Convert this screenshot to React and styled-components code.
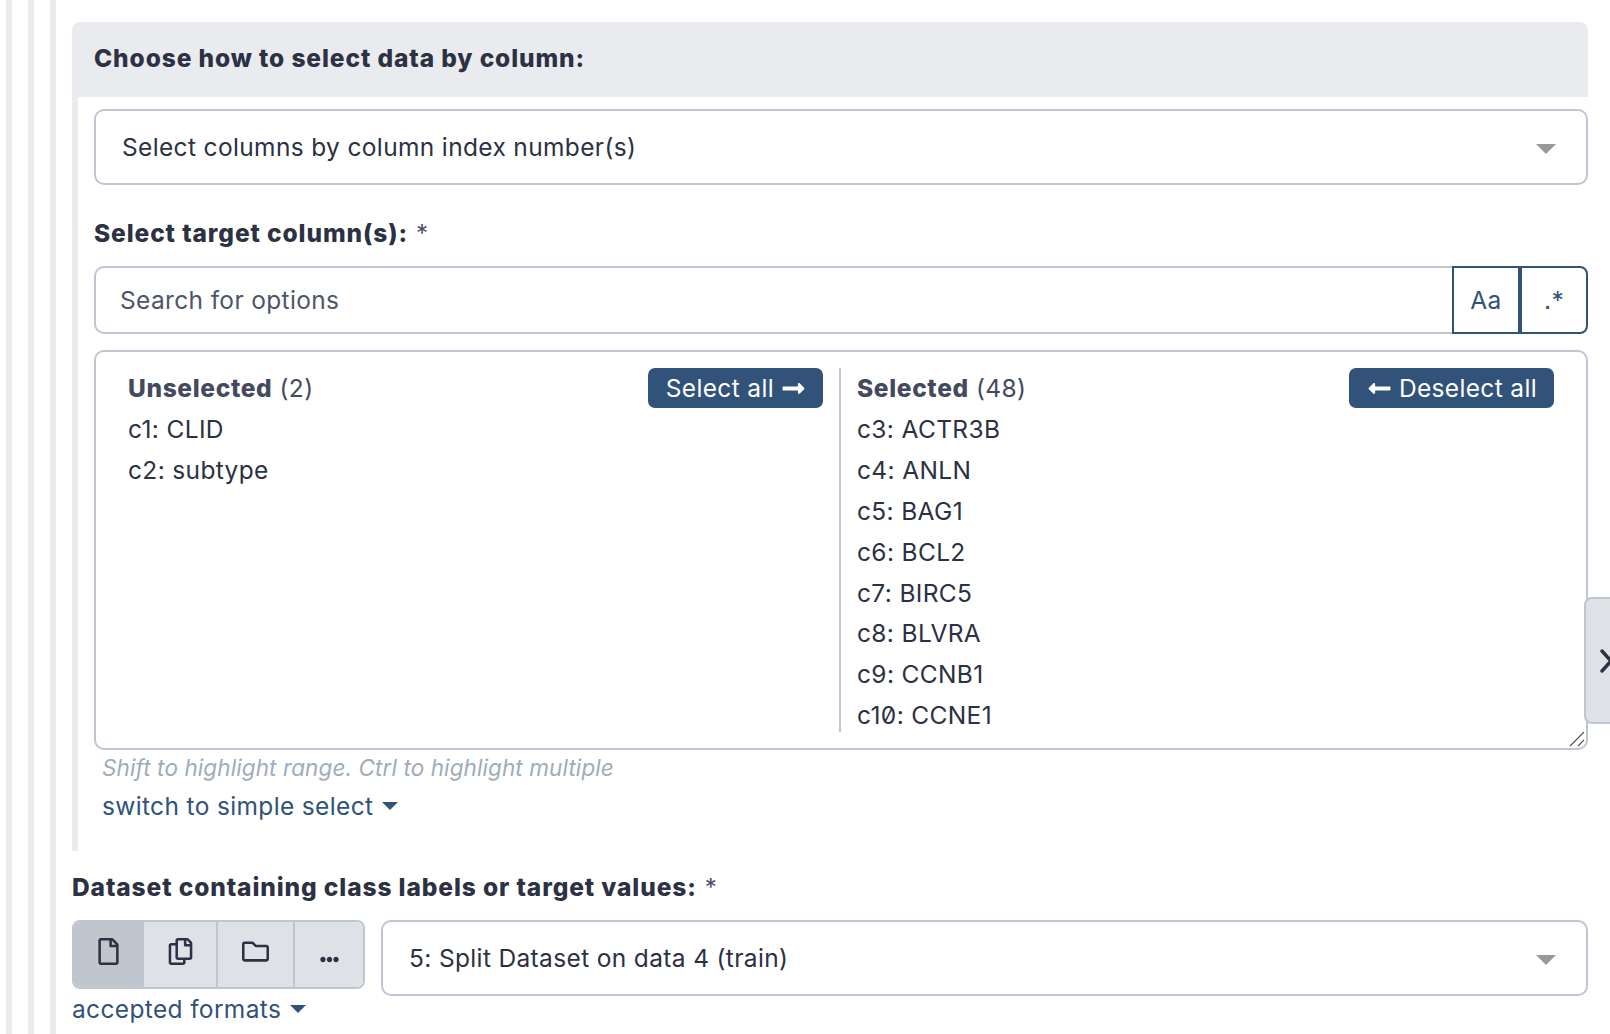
import React from 'react';
import styled, { createGlobalStyle } from 'styled-components';
import { FaRegFile, FaRegCopy, FaRegFolder, FaEllipsisH, FaLongArrowAltLeft, FaLongArrowAltRight } from 'react-icons/fa';

const ink = '#2c3143';
const brand = '#315279';
const line = '#c0c6d1';
const pale = '#e9ebef';

const GlobalStyle = createGlobalStyle`
    html, body {
        margin: 0;
        height: 1034px;
        overflow: hidden;
        background: #fff;
    }
    body {
        font-family: Inter, "Liberation Sans", sans-serif;
        font-size: 24.5px;
        font-feature-settings: 'zero';
        letter-spacing: 0.35px;
        color: ${ink};
    }
    * {
        box-sizing: border-box;
    }
`;

const Stripe = styled.div`
    border-left: 6px solid ${pale};
    padding-left: 16px;
    height: 1034px;
    margin-left: ${({ $outer }) => ($outer ? '6px' : '0')};
`;

const Content = styled.div`
    padding: 22px 22px 0 0;
`;

const Section = styled.section`
    margin-bottom: 19px;
`;

const SectionTitle = styled.h2`
    margin: 0;
    height: 75px;
    padding: 0 0 3px 22px;
    display: flex;
    align-items: center;
    background: ${pale};
    border-radius: 8px 8px 0 0;
    font-size: 24.5px;
    font-weight: 800;
    letter-spacing: 0.9px;
`;

const SectionBody = styled.div`
    border-left: 6px solid ${pale};
    padding: 12px 0 32px 16px;
    height: 754px;
`;

const Select = styled.div`
    flex: ${({ $grow }) => ($grow ? 1 : 'none')};
    height: 76px;
    padding: 0 30px 0 26px;
    display: flex;
    align-items: center;
    justify-content: space-between;
    border: 2px solid ${line};
    border-radius: 10px;
`;

const SelectArrow = styled.span`
    width: 0;
    height: 0;
    margin-top: 3px;
    border-left: 10px solid transparent;
    border-right: 10px solid transparent;
    border-top: 10px solid #999;
`;

const Label = styled.div`
    height: 34px;
    display: flex;
    align-items: center;
    gap: 8px;
    font-weight: 800;
    letter-spacing: 0.9px;
    margin: ${({ $top }) => $top} 0 ${({ $bottom }) => $bottom};
`;

const Required = styled.span`
    font-size: 24px;
    font-weight: 400;
    letter-spacing: 0;
    color: #4b5163;
`;

const SearchRow = styled.div`
    display: flex;
    height: 68px;
    margin-bottom: 16px;
`;

const SearchInput = styled.input`
    flex: 1;
    min-width: 0;
    padding: 0 24px;
    border: 2px solid ${line};
    border-right: 0;
    border-radius: 10px 0 0 10px;
    font: inherit;
    letter-spacing: inherit;
    outline: none;
    &::placeholder {
        color: #4e5668;
        opacity: 1;
    }
`;

const Toggle = styled.button`
    width: 68px;
    background: #fff;
    border: 2px solid ${brand};
    border-radius: ${({ $last }) => ($last ? '0 8px 8px 0' : '0')};
    color: ${brand};
    font: inherit;
    letter-spacing: inherit;
    padding: 0;
`;

const ColumnsBox = styled.div`
    position: relative;
    height: 400px;
    padding: 16px 32px 16px 32px;
    display: grid;
    grid-template-columns: 711px 1fr;
    border: 2px solid ${line};
    border-radius: 10px;
`;

const Column = styled.div`
    min-width: 0;
    padding: ${({ $right }) => ($right ? '0 0 0 16px' : '0 16px 0 0')};
    border-left: ${({ $right }) => ($right ? `2px solid ${line}` : '0')};
    overflow: hidden;
`;

const ColumnHead = styled.div`
    height: 40px;
    margin-bottom: 1px;
    display: flex;
    align-items: center;
    justify-content: space-between;
`;

const HeadText = styled.span`
    color: #434a60;
`;

const HeadStrong = styled.strong`
    font-weight: 800;
    letter-spacing: 0.65px;
`;

const MoveButton = styled.button`
    height: 40px;
    padding: 0 17px 0 18px;
    display: flex;
    align-items: center;
    gap: 7px;
    background: ${brand};
    border: 0;
    border-radius: 7px;
    color: #fff;
    font: inherit;
    letter-spacing: inherit;
`;

const Option = styled.div`
    height: 40.8px;
    display: flex;
    align-items: center;
`;

const Grip = styled.svg`
    position: absolute;
    right: 1px;
    bottom: 1px;
`;

const SideTab = styled.div`
    position: absolute;
    top: 597px;
    left: 1584px;
    width: 40px;
    height: 127px;
    display: flex;
    align-items: center;
    padding-left: 14px;
    background: #dee1e6;
    border: 2px solid ${line};
    border-radius: 8px;
`;

const Hint = styled.div`
    height: 37px;
    padding-bottom: 2px;
    margin: 0 0 0 8px;
    display: flex;
    align-items: center;
    font-size: 22.5px;
    font-style: italic;
    letter-spacing: 0.1px;
    color: #9eacbb;
`;

const Expander = styled.div`
    height: ${({ $tall }) => ($tall ? '38px' : '40px')};
    margin-left: ${({ $indent }) => ($indent ? '8px' : '0')};
    display: flex;
    align-items: center;
    gap: 9px;
    color: ${brand};
`;

const Caret = styled.span`
    width: 0;
    height: 0;
    border-left: 8px solid transparent;
    border-right: 8px solid transparent;
    border-top: 8px solid ${brand};
`;

const DataRow = styled.div`
    display: flex;
    align-items: flex-start;
    gap: 16px;
`;

const SourceColumn = styled.div`
    flex: none;
`;

const SourceGroup = styled.div`
    width: 293px;
    height: 69px;
    display: flex;
    border: 2px solid ${line};
    border-radius: 8px;
    overflow: hidden;
`;

const SourceButton = styled.div`
    flex: ${({ $width }) => ($width ? `0 0 ${$width}px` : 1)};
    display: flex;
    align-items: ${({ $low }) => ($low ? 'flex-end' : 'center')};
    justify-content: center;
    padding-bottom: ${({ $low }) => ($low ? '18px' : '6px')};
    background: ${({ $active }) => ($active ? '#bfc6ce' : '#dee1e6')};
    border-left: ${({ $first }) => ($first ? '0' : `2px solid ${line}`)};
    color: ${ink};
`;

const unselected = ['c1: CLID', 'c2: subtype'];
const selected = ['c3: ACTR3B', 'c4: ANLN', 'c5: BAG1', 'c6: BCL2', 'c7: BIRC5', 'c8: BLVRA', 'c9: CCNB1', 'c10: CCNE1'];

export default function App() {
    return (
        <>
            <GlobalStyle />
            <Stripe $outer>
                <Stripe>
                    <Stripe>
                        <Content>
                            <Section>
                                <SectionTitle>Choose how to select data by column:</SectionTitle>
                                <SectionBody>
                                    <Select>
                                        Select columns by column index number(s)
                                        <SelectArrow />
                                    </Select>
                                    <Label $top="31px" $bottom="16px">
                                        Select target column(s): <Required>*</Required>
                                    </Label>
                                    <SearchRow>
                                        <SearchInput placeholder="Search for options" readOnly />
                                        <Toggle>Aa</Toggle>
                                        <Toggle $last>.*</Toggle>
                                    </SearchRow>
                                    <ColumnsBox>
                                        <Column>
                                            <ColumnHead>
                                                <HeadText>
                                                    <HeadStrong>Unselected</HeadStrong> (2)
                                                </HeadText>
                                                <MoveButton>
                                                    Select all <FaLongArrowAltRight size={25} />
                                                </MoveButton>
                                            </ColumnHead>
                                            {unselected.map(option => (
                                                <Option key={option}>{option}</Option>
                                            ))}
                                        </Column>
                                        <Column $right>
                                            <ColumnHead>
                                                <HeadText>
                                                    <HeadStrong>Selected</HeadStrong> (48)
                                                </HeadText>
                                                <MoveButton>
                                                    <FaLongArrowAltLeft size={25} /> Deselect all
                                                </MoveButton>
                                            </ColumnHead>
                                            {selected.map(option => (
                                                <Option key={option}>{option}</Option>
                                            ))}
                                        </Column>
                                        <Grip width="16" height="16" viewBox="0 0 16 16">
                                            <path d="M1 15 L15 1 M9 15 L15 9" stroke="#555" strokeWidth="1.2" />
                                        </Grip>
                                    </ColumnsBox>
                                    <Hint>Shift to highlight range. Ctrl to highlight multiple</Hint>
                                    <Expander $tall $indent>
                                        switch to simple select <Caret />
                                    </Expander>
                                </SectionBody>
                            </Section>
                            <Label $top="0" $bottom="16px">
                                Dataset containing class labels or target values: <Required>*</Required>
                            </Label>
                            <DataRow>
                                <SourceColumn>
                                    <SourceGroup>
                                        <SourceButton $first $active $width={68}>
                                            <FaRegFile size={27} />
                                        </SourceButton>
                                        <SourceButton $width={74}>
                                            <FaRegCopy size={27} />
                                        </SourceButton>
                                        <SourceButton $width={77}>
                                            <FaRegFolder size={27} />
                                        </SourceButton>
                                        <SourceButton $low>
                                            <FaEllipsisH size={19} />
                                        </SourceButton>
                                    </SourceGroup>
                                    <Expander>
                                        accepted formats <Caret />
                                    </Expander>
                                </SourceColumn>
                                <Select $grow>
                                    5: Split Dataset on data 4 (train)
                                    <SelectArrow />
                                </Select>
                            </DataRow>
                        </Content>
                    </Stripe>
                </Stripe>
            </Stripe>
            <SideTab>
                <svg width="12" height="24" viewBox="0 0 12 24">
                    <path d="M2 2 L11 12 L2 22" fill="none" stroke={ink} strokeWidth="3.4" strokeLinecap="round" />
                </svg>
            </SideTab>
        </>
    );
}
